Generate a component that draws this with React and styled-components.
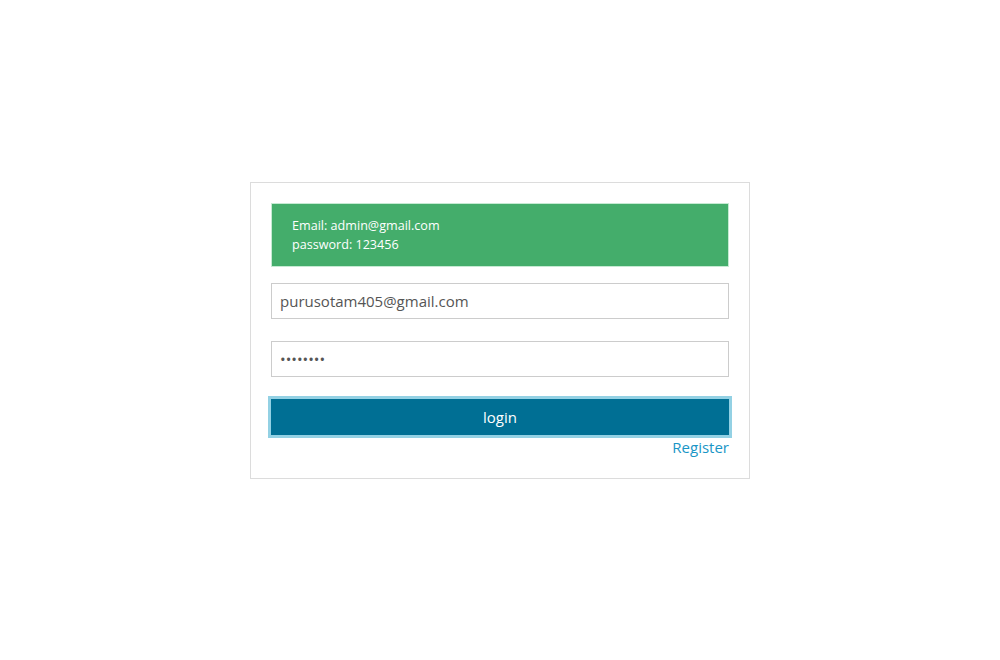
import React, { useState } from "react";
import styled, { createGlobalStyle } from "styled-components";

const GlobalStyle = createGlobalStyle`
    html, body {
        margin: 0;
        padding: 0;
        background: #fff;
        font-family: "Open Sans", "Liberation Sans", sans-serif;
    }
`;

const Page = styled.div`
    width: 100%;
    height: 660px;
    display: flex;
    align-items: center;
    justify-content: center;
`;

const Card = styled.form`
    box-sizing: border-box;
    width: 500px;
    height: 297px;
    margin-top: 1px;
    padding: 20px 20px 19px;
    border: 1px solid #dcdcdc;
    display: flex;
    flex-direction: column;
`;

const Alert = styled.div`
    box-sizing: border-box;
    height: 64px;
    padding: 12px 20px;
    background: #44ad6b;
    border: 1px solid #c6ead3;
    color: #fff;
    font-size: 12.6px;
    line-height: 19px;
`;

const Input = styled.input`
    box-sizing: border-box;
    width: 100%;
    height: 36px;
    margin-top: ${(props) => props.$gap}px;
    padding: 0 8px;
    border: 1px solid #cccccc;
    outline: none;
    font-family: "Open Sans", "Liberation Sans", sans-serif;
    font-size: 15px;
    color: #555;
`;

const Button = styled.button`
    box-sizing: border-box;
    height: 36px;
    margin-top: 22px;
    border: none;
    background: #006f94;
    color: #fff;
    font-family: "Open Sans", "Liberation Sans", sans-serif;
    font-size: 15px;
    box-shadow: 0 0 0 3px #93d1e4;
    cursor: pointer;
`;

const RegisterLink = styled.a`
    align-self: flex-end;
    margin-top: 2px;
    color: #1a96c6;
    font-size: 15px;
    line-height: 20px;
    text-decoration: none;
`;

export default function App() {
    const [email, setEmail] = useState("purusotam405@gmail.com");
    const [password, setPassword] = useState("12345678");
    return (
        <Page>
            <GlobalStyle />
            <Card onSubmit={(e) => e.preventDefault()}>
                <Alert>
                    Email: admin@gmail.com
                    <br />
                    password: 123456
                </Alert>
                <Input
                    $gap={16}
                    type="email"
                    value={email}
                    onChange={(e) => setEmail(e.target.value)}
                />
                <Input
                    $gap={22}
                    type="password"
                    value={password}
                    onChange={(e) => setPassword(e.target.value)}
                />
                <Button type="submit">login</Button>
                <RegisterLink href="#">Register</RegisterLink>
            </Card>
        </Page>
    );
}
